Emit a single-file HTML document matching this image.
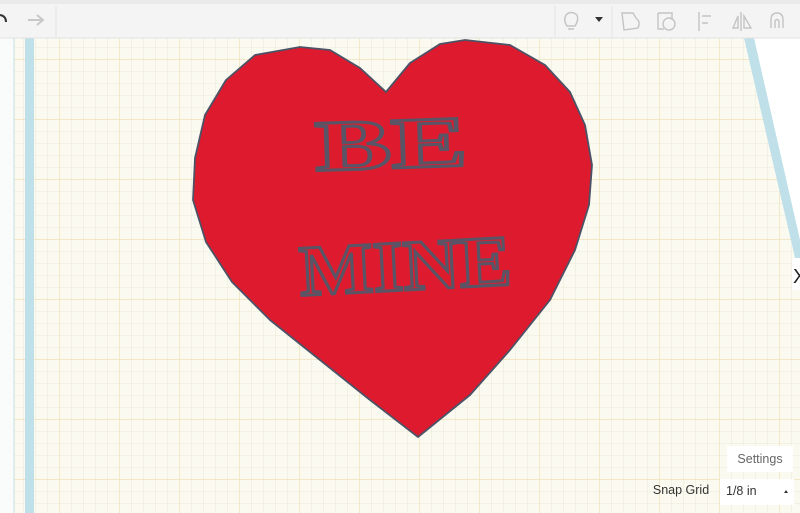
<!DOCTYPE html>
<html><head><style>
html,body{margin:0;padding:0;width:800px;height:513px;overflow:hidden;font-family:"Liberation Sans",sans-serif;}
</style></head><body>
<svg width="800" height="513" viewBox="0 0 800 513" xmlns="http://www.w3.org/2000/svg">
<defs>
<pattern id="g" width="12" height="12" patternUnits="userSpaceOnUse">
<rect width="12" height="12" fill="#fbfaf1"/>
<path d="M12 0V12M0 12H12" stroke="#e8e4d0" stroke-width="0.8"/>
</pattern>
<pattern id="G" width="60" height="60" patternUnits="userSpaceOnUse">
<rect width="60" height="60" fill="url(#g)"/>
<path d="M60 0V60M0 60H60" stroke="#efdcb0" stroke-width="1.2"/>
</pattern>
</defs>
<rect width="800" height="513" fill="url(#G)"/>
<rect x="0" y="38" width="14" height="475" fill="#fafcfc"/>
<line x1="14" y1="38" x2="14" y2="513" stroke="#c6dfe4" stroke-width="1"/>
<rect x="25" y="38" width="9" height="475" fill="#bfe0e8"/>
<polygon points="744,38 800,38 800,260 796,260" fill="#ffffff"/>
<polygon points="744,38 754,38 800,240 800,262 796,262" fill="#bfe0e8"/>
<rect x="792" y="258" width="8" height="32" fill="#fff"/>
<text x="793" y="283" font-size="20" fill="#222">X</text>
<rect x="0" y="0" width="800" height="4" fill="#eaeaea"/>
<rect x="0" y="4" width="800" height="34" fill="#f4f4f4"/>
<line x1="0" y1="38" x2="800" y2="38" stroke="#e2e2e2"/>
<line x1="56" y1="6" x2="56" y2="38" stroke="#e4e4e4"/>
<line x1="555" y1="6" x2="555" y2="38" stroke="#e4e4e4"/>
<line x1="612" y1="6" x2="612" y2="38" stroke="#e4e4e4"/>
<path d="M0 15 Q6 16 6 22" stroke="#333" stroke-width="2" fill="none"/>
<path d="M28 20 H42 M37 15 L43 20 L37 25" stroke="#c8c8c8" stroke-width="2" fill="none"/>
<g stroke="#c4c4c4" stroke-width="1.4" fill="none">
<path d="M567 26 Q563 20 566 15 Q571 10 577 15 Q579 20 575 26 Z M568 29 H574"/>
<path d="M622 13 H633 L636 18 Q641 22 638 28 L624 30 Z"/>
<path d="M658 13 H672 V20 M658 13 V29 H664"/><circle cx="669" cy="24" r="6"/>
<path d="M699 12 V31 M702 16 H711 M702 23 H708"/>
<path d="M741 12 V31 M738 28 L733 28 L738 16 Z M744 28 L751 28 L744 16 Z"/>
<path d="M771 28 V20 Q771 13 777 13 Q783 13 783 20 V28 M775 28 V21 Q777 18 779 21 V28"/>
</g>
<path d="M595 17 L603 17 L599 22 Z" fill="#333"/>
<polygon points="255,55 300,47 330,50 360,68 386,92 410,63 440,44 465,40 510,45 545,65 570,92 585,125 592,165 589,205 575,250 550,300 510,350 470,395 418,437 370,400 320,360 270,320 232,282 206,242 193,200 195,158 205,115 226,80" fill="#dd1a2e" stroke="#4d5366" stroke-width="1.8" stroke-linejoin="round"/>
<text x="391" y="168" text-anchor="middle" font-family="Liberation Serif,serif" font-weight="bold" font-size="72" fill="#dc1b2d" stroke="#5a5566" stroke-width="3" textLength="152" lengthAdjust="spacingAndGlyphs" transform="rotate(-2 391 140)">BE</text>
<text x="405" y="290" text-anchor="middle" font-family="Liberation Serif,serif" font-weight="bold" font-size="72" fill="#dc1b2d" stroke="#5a5566" stroke-width="3" transform="rotate(-3 405 260)" textLength="212" lengthAdjust="spacingAndGlyphs">MINE</text>
<rect x="727" y="446" width="66" height="26" fill="#fff"/>
<text x="760" y="463" text-anchor="middle" font-size="12.5" fill="#666">Settings</text>
<text x="681" y="494" text-anchor="middle" font-size="12.5" fill="#333">Snap Grid</text>
<rect x="720" y="479" width="74" height="26" fill="#fff"/>
<text x="726" y="495" font-size="12.5" fill="#333">1/8 in</text>
<path d="M784 493 L788 493 L786 490 Z" fill="#333"/>
</svg>
</body></html>
